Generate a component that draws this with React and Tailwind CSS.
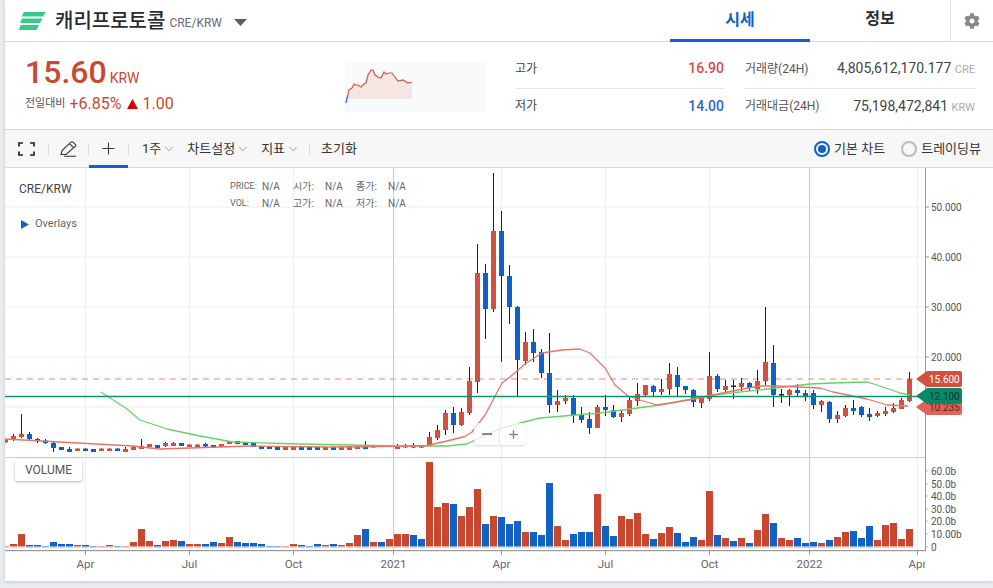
import React from 'react';
import { ChevronDown, Plus } from 'lucide-react';
import { FaCog } from 'react-icons/fa';

// hi, body top, body bottom, lo, colour. index i sits at x = 5.5 + 8i
const candles = [
  [439.5,439.5,442.5,442.5,'r'],[434,436,440,441,'r'],[414,434,437,438,'r'],[432,434,439,441,'b'],[438,439,441,443,'b'],
  [439,440.5,443,444,'b'],[442,443,448,452,'b'],[447,447,450,450,'b'],[447,449,452,452,'b'],[448.5,448.5,451,451,'r'],
  [448.5,448.5,451,451,'b'],[449,449,452,452,'b'],[448.5,448.5,451,451,'r'],[448.5,448.5,451,451,'r'],[448.5,448.5,451,451,'b'],
  [447,449,452,452,'r'],[446,447,450,450,'r'],[439,446,449,449,'r'],[444,444,447,447,'r'],[445,445,448,448,'b'],
  [442,443,446,447,'r'],[442,443,446,446,'r'],[443,443,446,446,'b'],[444.5,444.5,447,447,'r'],[444.5,444.5,447,447,'r'],
  [443,444,446.5,447,'b'],[445,445,448,448,'b'],[444,444,447,447,'r'],[441,441,444,444,'r'],[441,441,444,444,'b'],
  [442,442,445,445,'b'],[443,443,447,447,'b'],[446,446,449,449,'b'],[446,446,449,449,'b'],[447,447,450,450,'b'],
  [447,447,450,450,'r'],[447,447,450,450,'r'],[446,447,450,450,'b'],[447,447,450,450,'b'],[447,447,450,450,'b'],
  [447,447,450,450,'r'],[447,447,450,450,'b'],[447,447,450,450,'r'],[447,447,450,450,'r'],[445,446,449,449,'r'],
  [441,446,449,449,'b'],[445.5,445.5,447.5,447.5,'r'],[445.5,445.5,447,447,'b'],[445.5,445.5,447,447,'b'],[444,446,449,449,'r'],
  [444,445,447.5,448,'r'],[443,445,447.5,448,'b'],[445,445,447.5,448,'b'],[432,437,446,446,'r'],[425,430,438,440,'r'],
  [410,413,430,435,'r'],[407,413,425,433,'b'],[408,412,425,426,'r'],[367,381,413,415,'r'],[244,273,382,393,'r'],
  [264,273,309,339,'b'],[173,231,309,312,'r'],[211,231,276,362,'b'],[265,276,307,324,'b'],[306,307,360,397,'b'],
  [332,342,361,365,'r'],[329,342,353,362,'b'],[349,352,373,378,'b'],[333,373,405,413,'b'],[390,401,405,412,'r'],
  [395,398,401,404,'r'],[395,398,415,423,'b'],[407,414,420,423,'b'],[412,419,428,434,'b'],[405,407,428,428,'r'],
  [395,407,410,416,'b'],[405,410,417,418,'b'],[410,413,417,422,'r'],[396,400,414,416,'r'],[383,394,401,406,'r'],
  [385,385,395,396,'r'],[385,386,392,397,'b'],[379,389,392,395,'r'],[363,374,389,395,'r'],[367,375,387,397,'b'],
  [386,386,390,394,'b'],[389,390,402,407,'b'],[397,398,403,408,'r'],[352,376,399,401,'r'],[374,376,389,392,'b'],
  [380,386,390,392,'r'],[380,385.5,387,399,'k'],[378,383,387,391,'r'],[382,383,388,391,'b'],[370,381,389,394,'r'],
  [307,362,381,385,'r'],[345,363,395,407,'b'],[389,394,395.5,403,'k'],[389,390,395,406,'r'],[384,390,393,397,'b'],
  [390,393,396,401,'b'],[390,393,405,409,'b'],[400,401,405,412,'r'],[401,402,419,423,'b'],[411,415,419,423,'r'],
  [405,408,416,417,'r'],[400,408,411,415,'b'],[406,407,415,417,'b'],[408,414,417,421,'b'],[411,413,416,417,'r'],
  [407,411,414,416,'r'],[403,408,412,413,'r'],[398,400,409,409,'r'],[372,379,401,402,'r'],
];

// bar height in px and colour, same index as candles
const volumes = [
  [0.5,'r'],[2.7,'r'],[12.7,'r'],[1.7,'b'],[1.7,'b'],[0.5,'b'],[4.7,'b'],[2.7,'b'],[2.7,'b'],[1.7,'r'],
  [1.7,'b'],[0.5,'b'],[0.5,'r'],[1.7,'r'],[0.5,'b'],[0.5,'r'],[4.7,'r'],[17.7,'r'],[5.7,'r'],[1.7,'b'],
  [5.7,'r'],[6.7,'r'],[5.7,'b'],[2.7,'r'],[2.7,'r'],[2.7,'b'],[4.7,'b'],[3.7,'r'],[9.7,'r'],[4.7,'b'],
  [3.7,'b'],[3.7,'b'],[2.7,'b'],[0.5,'b'],[0.5,'b'],[0.5,'r'],[2.7,'r'],[1.7,'b'],[0.5,'b'],[2.7,'b'],
  [1.7,'r'],[2.7,'b'],[1.7,'r'],[3.7,'r'],[11.7,'r'],[17.7,'b'],[4.7,'r'],[4.7,'b'],[7.7,'r'],[12.7,'r'],
  [12.7,'r'],[11.7,'b'],[7.7,'b'],[84.7,'r'],[39.7,'r'],[43.7,'r'],[42.7,'b'],[30.7,'r'],[39.7,'r'],[57.7,'r'],
  [22.7,'b'],[30.7,'r'],[29.7,'b'],[22.7,'b'],[25.7,'b'],[14.7,'r'],[14.7,'b'],[11.7,'b'],[63.7,'b'],[20.7,'r'],
  [6.7,'r'],[12.7,'b'],[14.7,'b'],[14.7,'b'],[52.7,'r'],[20.7,'b'],[10.7,'b'],[30.7,'r'],[27.7,'r'],[33.7,'r'],
  [12.7,'r'],[7.7,'b'],[13.7,'r'],[19.7,'r'],[13.7,'b'],[4.7,'b'],[9.7,'b'],[6.7,'r'],[55.7,'r'],[11.7,'b'],
  [8.7,'r'],[5.7,'b'],[8.7,'r'],[3.7,'b'],[16.7,'r'],[32.7,'r'],[23.7,'b'],[8.7,'r'],[6.7,'r'],[8.7,'b'],
  [3.7,'b'],[4.7,'b'],[3.7,'r'],[6.7,'b'],[9.7,'r'],[14.7,'r'],[15.7,'b'],[8.7,'b'],[20.7,'b'],[6.7,'r'],
  [21.7,'r'],[23.7,'r'],[7.7,'r'],[17.7,'r'],
];

const redLine = '5,439 60,442 133,446 150,448 160,449 250,446 330,447 425,446 447,441 465,436.5 472,432 485,415 502,383 510,377 525,364 542,353 562,350 580,349 590,353 605,368 615,385 628,396 640,400 657,405 677,402 700,398 727,392 760,386 777,386 820,388 833,392 867,399 887,405 908,406';
const greenLine = '101,392 127,409 140,420 167,429 200,436 233,442 300,444 400,446 447,446 467,444 473,441 499,429 520,423 540,418 600,413 660,405 713,395 767,389 810,384 833,383 867,382 877,385 900,393 910,395';
const sparkPoints = '347.5,96 349,90 352,88 354,84 356,85 358,85 361,87 364,84 366,83 368,75 371,70 373,70 375,75 378,77 381,78 384,72 386,74 389,73 392,73 395,77 398,81 403,80 408,83 412,82';

const monthLines = [85.5, 189.5, 293.5, 501.5, 605.5, 709.5, 917.5];
const yearLines = [393.5, 809.5];
const xLabels = [[85.5,'Apr'],[189.5,'Jul'],[293.5,'Oct'],[393.5,'2021'],[501.5,'Apr'],[605.5,'Jul'],[709.5,'Oct'],[809.5,'2022'],[917.5,'Apr']];
const priceTicks = [[207,'50.000'],[257,'40.000'],[307,'30.000'],[357,'20.000'],[407,'']];
const volTicks = [[471,'60.0b'],[484,'50.0b'],[496,'40.0b'],[509,'30.0b'],[521,'20.0b'],[534,'10.00b'],[547,'0']];

const bodyColor = { r: '#d1503f', b: '#1160c8', k: '#222222' };
const volColor = { r: '#c8472e', b: '#1262c6' };
const volBase = { r: '#eba898', b: '#7db0ea' };

function PriceTag({ y, fill, text, color }) {
  return (
    <g>
      <path d={`M916 ${y} L927 ${y - 8} L960 ${y - 8} Q962 ${y - 8} 962 ${y - 6} L962 ${y + 6} Q962 ${y + 8} 960 ${y + 8} L927 ${y + 8} Z`} fill={fill} />
      <text x="929" y={y + 3.6} fontSize="10" fill={color}>{text}</text>
    </g>
  );
}

function Chart() {
  return (
    <svg className="block w-[988px] h-[413px]" viewBox="5 168 988 413">
      {priceTicks.map(([y]) => <rect key={y} x="5" y={y - 0.5} width="920" height="1" fill="#eeeef1" />)}
      {monthLines.map((x) => <rect key={x} x={x - 0.5} y="168" width="1" height="383" fill="#eeeef1" />)}
      {yearLines.map((x) => <rect key={x} x={x - 0.5} y="168" width="1" height="383" fill="#c9c9cb" />)}
      <rect x="5" y="457" width="920" height="1" fill="#cfcfd1" />

      {volumes.map(([h, c], i) => (
        <g key={i}>
          <rect x={2 + 8 * i} y={546.7 - h} width="7" height={h} fill={volColor[c]} />
          <rect x={2 + 8 * i} y="546" width="7" height="1.5" fill={volBase[c]} />
        </g>
      ))}

      <line x1="5" x2="925" y1="379" y2="379" stroke="#efb1ab" strokeWidth="1.5" strokeDasharray="6 5" />

      {candles.map(([hi, top, bot, lo, c], i) => (
        <g key={i}>
          <rect x={5 + 8 * i} y={hi} width="1" height={lo - hi} fill="#222222" />
          <rect x={3 + 8 * i} y={top} width="5" height={bot - top} fill={bodyColor[c]} />
        </g>
      ))}

      <polyline points={greenLine} fill="none" stroke="#66d266" strokeWidth="1.3" strokeLinejoin="round" />
      <polyline points={redLine} fill="none" stroke="#e8756d" strokeWidth="1.3" strokeLinejoin="round" />
      <line x1="5" x2="925" y1="396.5" y2="396.5" stroke="#0f9270" strokeWidth="1.3" />

      <rect x="925" y="168" width="1" height="383" fill="#9a9a9a" />
      <rect x="5" y="550" width="921" height="1.2" fill="#9a9a9a" />
      {monthLines.concat(yearLines).map((x) => <rect key={x} x={x - 0.5} y="551" width="1" height="4" fill="#9a9a9a" />)}
      {priceTicks.map(([y]) => <rect key={y} x="926" y={y - 0.5} width="3" height="1" fill="#9a9a9a" />)}
      {volTicks.map(([y]) => <rect key={y} x="926" y={y - 0.5} width="2" height="1" fill="#bbbbbb" />)}

      <g fontSize="10" fill="#555555">
        {priceTicks.map(([y, t]) => <text key={y} x="931" y={y + 3.5}>{t}</text>)}
        {volTicks.map(([y, t]) => <text key={y} x="931" y={y + 3.5}>{t}</text>)}
      </g>
      <svg x="5" y="168" width="920" height="413" viewBox="5 168 920 413">
        <g fontSize="11.5" fill="#666666" textAnchor="middle">
          {xLabels.map(([x, t]) => <text key={x} x={x} y="568">{t}</text>)}
        </g>
      </svg>

      <PriceTag y={407} fill="#e0635b" text="10.235" color="#5c2320" />
      <PriceTag y={379} fill="#d1503f" text="15.600" color="#ffffff" />
      <PriceTag y={396} fill="#078a68" text="12.100" color="#10302a" />
    </svg>
  );
}

function Legend() {
  const rows = [
    ['PRICE:', '시가:', '종가:'],
    ['VOL:', '고가:', '저가:'],
  ];
  return (
    <div className="absolute left-[225px] top-[10px] text-[10px] leading-[17px] text-[#666]">
      {rows.map((r) => (
        <div key={r[0]} className="flex">
          <span className="w-[32px] text-[9px]">{r[0]}</span>
          <span className="w-[31px]">N/A</span>
          <span className="w-[32px]">{r[1]}</span>
          <span className="w-[31px]">N/A</span>
          <span className="w-[32px]">{r[2]}</span>
          <span>N/A</span>
        </div>
      ))}
    </div>
  );
}

function Stat({ label, value, color, border }) {
  return (
    <div className={`flex items-center justify-between ${border ? 'h-[40px] border-b border-[#e6e6e8]' : 'h-[34px]'}`}>
      <span className="text-[12px] text-[#444]">{label}</span>
      <span className={`text-[14px] font-medium ${color}`}>{value}</span>
    </div>
  );
}

function Volume({ label, value, unit, border }) {
  return (
    <div className={`flex items-center justify-between ${border ? 'h-[40px] border-b border-[#e6e6e8]' : 'h-[34px]'}`}>
      <span className="text-[12px] text-[#555]">{label}</span>
      <span className="text-[14px] text-[#444]">
        {value} <span className="text-[11px] text-[#aaa]">{unit}</span>
      </span>
    </div>
  );
}

function Sep() {
  return <div className="w-px h-[12px] bg-[#dcdcdc]" />;
}

function Menu({ label, className }) {
  return (
    <div className={`flex items-center text-[13px] text-[#333] ${className}`}>
      {label}
      <ChevronDown className="w-[14px] h-[14px] ml-[1px] text-[#888]" strokeWidth={1.3} />
    </div>
  );
}

export default function App() {
  return (
    <div className="h-[588px] w-[993px] overflow-hidden bg-[#e9ecf1] pl-[5px] font-['Roboto','Noto_Sans_CJK_KR',sans-serif]">
      <div className="h-[581px] bg-white shadow-[0_1px_4px_rgba(0,0,0,0.15)]">
        {/* title and tabs */}
        <div className="flex h-[42px] box-border items-stretch border-b border-[#d9d9dc]">
          <div className="flex items-center">
            <svg className="ml-[14px] w-[27px] h-[18px]" viewBox="0 0 27 18">
              <path d="M5 0 H27 L24 4.5 H2.5 Z M3.2 6.5 H23.5 L20.8 11 H1 Z M1.5 13 H20 L17.5 18 H0 Z" fill="#37c98a" />
            </svg>
            <span className="ml-[9px] text-[20px] font-medium text-[#2a2c33]">캐리프로토콜</span>
            <span className="ml-[4px] mt-[5px] text-[12px] text-[#666a75]">CRE/KRW</span>
            <svg className="ml-[12px] mt-[3px] w-[13px] h-[7px]" viewBox="0 0 13 7">
              <path d="M0 0 H13 L6.5 7 Z" fill="#5a5f6e" />
            </svg>
          </div>
          <div className="ml-auto flex">
            <div className="w-[140px] flex items-center justify-center -mb-px border-b-[3px] border-[#0f62d6] text-[16px] font-bold text-[#1160c8]">시세</div>
            <div className="w-[140px] flex items-center justify-center pb-[3px] text-[16px] font-bold text-[#2a2c33]">정보</div>
            <div className="w-[43px] flex items-center justify-center border-l border-[#e0e0e6]">
              <FaCog className="w-[16px] h-[16px] text-[#888]" />
            </div>
          </div>
        </div>

        {/* price summary */}
        <div className="flex h-[88px] box-border border-b border-[#d9d9dc]">
          <div className="w-[340px] pl-[20px] pt-[11px]">
            <div className="flex items-baseline text-[#c84a31]">
              <span className="text-[32px] leading-[38px] font-medium">15.60</span>
              <span className="ml-[3px] text-[14px]">KRW</span>
            </div>
            <div className="flex items-center mt-[3px] h-[20px]">
              <span className="text-[11px] text-[#555]">전일대비</span>
              <span className="ml-[4px] text-[16px] text-[#c84a31]">+6.85%</span>
              <svg className="ml-[6px] w-[11px] h-[10px]" viewBox="0 0 11 10"><path d="M5.5 0 L11 10 H0 Z" fill="#d60000" /></svg>
              <span className="ml-[4px] text-[16px] text-[#c84a31]">1.00</span>
            </div>
          </div>
          <svg className="w-[140px] h-[50px] mt-[20px] bg-[#f9fafc]" viewBox="345 62 140 50">
            <polygon points={`${sparkPoints} 412,99 347.5,99`} fill="#f5e6e3" />
            <polyline points={sparkPoints} fill="none" stroke="#cf5a45" strokeWidth="1.2" />
            <polyline points="346,103 347.5,96" fill="none" stroke="#2a7de1" strokeWidth="1.4" />
          </svg>
          <div className="w-[209px] ml-[30px] pt-[7px]">
            <Stat label="고가" value="16.90" color="text-[#d1503f]" border />
            <Stat label="저가" value="14.00" color="text-[#2f66c4]" />
          </div>
          <div className="w-[230px] ml-[21px] pt-[7px]">
            <Volume label="거래량(24H)" value="4,805,612,170.177" unit="CRE" border />
            <Volume label="거래대금(24H)" value="75,198,472,841" unit="KRW" />
          </div>
        </div>

        {/* toolbar */}
        <div className="flex h-[38px] box-border items-center border-b border-[#d9d9dc] bg-[#f7f7f7]">
          <div className="w-[43px] flex justify-center">
            <svg className="w-[17px] h-[14px]" viewBox="0 0 17 14" fill="none" stroke="#222" strokeWidth="1.7">
              <path d="M1 4.5 V1 H5 M12 1 H16 V4.5 M16 9.5 V13 H12 M5 13 H1 V9.5" />
            </svg>
          </div>
          <Sep />
          <div className="w-[39px] flex justify-center">
            <svg className="w-[17px] h-[16px]" viewBox="0 0 17 16" fill="none" stroke="#333" strokeWidth="1.1">
              <path d="M1 13.5 L2 9.5 L11 1.2 Q12 0.4 13 1.2 L15.5 3.5 Q16.2 4.5 15.5 5.2 L6 13.5 Z M9.5 2.6 L14 6.8 M4 15.2 H16" />
            </svg>
          </div>
          <Sep />
          <div className="w-[39px] h-full flex items-center justify-center border-b-[3px] border-[#0f62d6] -mb-px">
            <Plus className="w-[19px] h-[19px] text-[#333] mt-[2px]" strokeWidth={1.3} />
          </div>
          <Sep />
          <Menu label="1주" className="ml-[13px]" />
          <Menu label="차트설정" className="ml-[11px]" />
          <Menu label="지표" className="ml-[11px]" />
          <div className="ml-[9px]"><Sep /></div>
          <span className="ml-[11px] text-[13px] text-[#333]">초기화</span>
          <div className="ml-auto flex items-center pr-[12px] text-[13px] text-[#333]">
            <div className="w-[16px] h-[16px] rounded-full border-2 border-[#1160c8] flex items-center justify-center">
              <div className="w-[8px] h-[8px] rounded-full bg-[#1160c8]" />
            </div>
            <span className="ml-[4px]">기본 차트</span>
            <div className="ml-[16px] w-[16px] h-[16px] rounded-full border-2 border-[#bbb]" />
            <span className="ml-[4px]">트레이딩뷰</span>
          </div>
        </div>

        {/* chart with its overlays */}
        <div className="relative h-[413px]">
          <Chart />
          <div className="absolute left-[14px] top-[12px] text-[12px] text-[#444]">CRE/KRW</div>
          <Legend />
          <div className="absolute left-[16px] top-[48px] flex items-center text-[11px] text-[#666]">
            <svg className="w-[8px] h-[9px]" viewBox="0 0 8 9"><path d="M0 0 L8 4.5 L0 9 Z" fill="#1160c8" /></svg>
            <span className="ml-[6px]">Overlays</span>
          </div>
          <div className="absolute left-[10px] top-[291px] h-[22px] w-[67px] flex items-center justify-center rounded-[2px] bg-white text-[12px] text-[#555] shadow-[0_1px_3px_rgba(0,0,0,0.3)]">VOLUME</div>
          <div className="absolute left-[469px] top-[255px] flex h-[22px] text-[#888] bg-white/70 rounded-[2px] shadow-[0_1px_2px_rgba(0,0,0,0.15)]">
            <div className="w-[26px] flex items-center justify-center border-r border-[#e8e8e8]">
              <div className="w-[10px] h-[2px] bg-[#888]" />
            </div>
            <div className="w-[26px] flex items-center justify-center">
              <Plus className="w-[13px] h-[13px]" strokeWidth={2.6} />
            </div>
          </div>
        </div>
      </div>
    </div>
  );
}
